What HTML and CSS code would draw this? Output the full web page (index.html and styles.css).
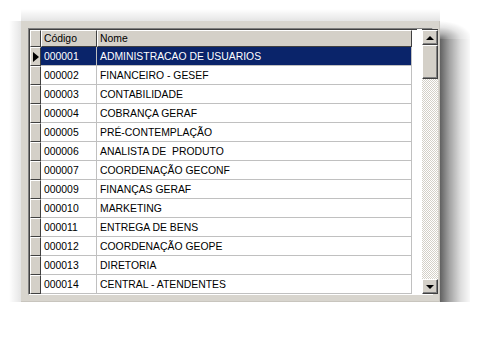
FILE: index.html
```html
<!DOCTYPE html>
<html>
<head>
<meta charset="utf-8">
<link rel="stylesheet" href="styles.css">
</head>
<body>
<div class="panel">
  <div class="grid">
    <div class="table">
      <div class="row head">
        <div class="ind"></div>
        <div class="cell code">Código</div>
        <div class="cell name">Nome</div>
      </div>
      <div class="row sel">
        <div class="ind"><span class="arrow"></span></div>
        <div class="cell code">000001</div>
        <div class="cell name">ADMINISTRACAO DE USUARIOS</div>
      </div>
      <div class="row"><div class="ind"></div><div class="cell code">000002</div><div class="cell name">FINANCEIRO - GESEF</div></div>
      <div class="row"><div class="ind"></div><div class="cell code">000003</div><div class="cell name">CONTABILIDADE</div></div>
      <div class="row"><div class="ind"></div><div class="cell code">000004</div><div class="cell name">COBRANÇA GERAF</div></div>
      <div class="row"><div class="ind"></div><div class="cell code">000005</div><div class="cell name">PRÉ-CONTEMPLAÇÃO</div></div>
      <div class="row"><div class="ind"></div><div class="cell code">000006</div><div class="cell name">ANALISTA DE&nbsp; PRODUTO</div></div>
      <div class="row"><div class="ind"></div><div class="cell code">000007</div><div class="cell name">COORDENAÇÃO GECONF</div></div>
      <div class="row"><div class="ind"></div><div class="cell code">000009</div><div class="cell name">FINANÇAS GERAF</div></div>
      <div class="row"><div class="ind"></div><div class="cell code">000010</div><div class="cell name">MARKETING</div></div>
      <div class="row"><div class="ind"></div><div class="cell code">000011</div><div class="cell name">ENTREGA DE BENS</div></div>
      <div class="row"><div class="ind"></div><div class="cell code">000012</div><div class="cell name">COORDENAÇÃO GEOPE</div></div>
      <div class="row"><div class="ind"></div><div class="cell code">000013</div><div class="cell name">DIRETORIA</div></div>
      <div class="row"><div class="ind"></div><div class="cell code">000014</div><div class="cell name">CENTRAL - ATENDENTES</div></div>
    </div>
    <div class="scrollbar">
      <div class="btn"><span class="tri up"></span></div>
      <div class="thumb"></div>
      <div class="track"></div>
      <div class="btn"><span class="tri down"></span></div>
    </div>
  </div>
</div>
</body>
</html>
```

FILE: styles.css
```css
html, body {
  margin: 0;
  padding: 0;
  background: #ffffff;
}
body {
  padding: 21px 0 0 21px;
  font-family: "Liberation Sans", Arial, sans-serif;
  font-size: 10.4px;
}
.panel {
  position: relative;
  z-index: 0;
  width: 419px;
  height: 281px;
  box-sizing: border-box;
  padding: 7px 6px 6px 7px;
  border-right: 1px solid #c8c5be;
  border-bottom: 1px solid #c8c5be;
}
/* soft drop shadow, drawn with gradients */
.panel::before {
  content: "";
  position: absolute;
  left: -12px;
  top: -12px;
  width: 461px;
  height: 325px;
  z-index: -2;
  background-repeat: no-repeat;
  background-image:
    linear-gradient(to right, rgba(0,0,0,0.62), rgba(0,0,0,0.36) 30%, rgba(0,0,0,0.13) 65%, rgba(0,0,0,0)),
    linear-gradient(to bottom, rgba(0,0,0,0.62), rgba(0,0,0,0.36) 30%, rgba(0,0,0,0.13) 65%, rgba(0,0,0,0)),
    radial-gradient(circle 32px at 0 0, rgba(0,0,0,0.62), rgba(0,0,0,0.36) 30%, rgba(0,0,0,0.13) 65%, rgba(0,0,0,0)),
    radial-gradient(32px 18px at 0 100%, rgba(0,0,0,0.55), rgba(0,0,0,0.3) 30%, rgba(0,0,0,0.1) 65%, rgba(0,0,0,0)),
    radial-gradient(18px 32px at 100% 0, rgba(0,0,0,0.55), rgba(0,0,0,0.3) 30%, rgba(0,0,0,0.1) 65%, rgba(0,0,0,0)),
    linear-gradient(to top, rgba(0,0,0,0.1), rgba(0,0,0,0)),
    linear-gradient(to left, rgba(0,0,0,0.1), rgba(0,0,0,0));
  background-position:
    431px 30px,
    30px 293px,
    431px 293px,
    431px 12px,
    12px 293px,
    12px 0,
    0 12px;
  background-size:
    32px 263px,
    401px 32px,
    32px 32px,
    32px 18px,
    18px 32px,
    419px 12px,
    12px 281px;
}
.panel::after {
  content: "";
  position: absolute;
  inset: 0;
  background: #d8d5ce;
  z-index: -1;
}
.grid {
  height: 267px;
  box-sizing: border-box;
  border-top: 1px solid #808080;
  border-left: 1px solid #808080;
  border-right: 1px solid #ffffff;
  border-bottom: 1px solid #ffffff;
  background: #ffffff;
  display: flex;
}
.grid > .table {
  border-top: 1px solid #404040;
  border-left: 1px solid #404040;
}
.table {
  width: 387px;
  flex: none;
  display: flex;
  flex-direction: column;
}
.row {
  display: flex;
  height: 19px;
  flex: none;
}
.row.head {
  height: 17px;
}
.ind {
  width: 11px;
  box-sizing: border-box;
  background: #d4d0c8;
  border-left: 1px solid #ffffff;
  border-top: 1px solid #ffffff;
  border-right: 1px solid #404040;
  border-bottom: 1px solid #404040;
  display: flex;
  align-items: center;
  justify-content: center;
  flex: none;
}
.cell {
  box-sizing: border-box;
  padding-left: 3px;
  display: flex;
  align-items: center;
  white-space: pre;
  color: #000;
  border-right: 1px solid #c0c0c0;
  border-bottom: 1px solid #c0c0c0;
  padding-top: 1px;
}
.code { width: 56px; }
.name { width: 315px; }
.head .cell {
  background: #d4d0c8;
  border-left: 1px solid #ffffff;
  border-top: 1px solid #ffffff;
  border-right: 1px solid #404040;
  border-bottom: 1px solid #404040;
  padding-left: 2px;
  padding-top: 0;
}
.sel .cell {
  background: #0a246a;
  color: #ffffff;
}
.arrow {
  width: 0;
  height: 0;
  border-top: 5px solid transparent;
  border-bottom: 5px solid transparent;
  border-left: 6px solid #000;
  margin-left: 1px;
}
.scrollbar {
  margin-left: 5px;
  width: 16px;
  flex: none;
  display: flex;
  flex-direction: column;
  border-top: 1px solid #404040;
}
.btn, .thumb {
  box-sizing: border-box;
  background: #d4d0c8;
  border-left: 1px solid #ffffff;
  border-top: 1px solid #ffffff;
  border-right: 1px solid #404040;
  border-bottom: 1px solid #404040;
  box-shadow: inset -1px -1px 0 #808080;
  flex: none;
}
.btn {
  height: 15px;
  display: flex;
  align-items: center;
  justify-content: center;
}
.thumb {
  height: 34px;
}
.track {
  flex: 1;
  background-color: #ffffff;
  background-image: repeating-conic-gradient(#d4d0c8 0 25%, #ffffff 0 50%);
  background-size: 2px 2px;
}
.tri {
  width: 0;
  height: 0;
  border-left: 4px solid transparent;
  border-right: 4px solid transparent;
}
.tri.up {
  border-bottom: 4px solid #000;
}
.tri.down {
  border-top: 4px solid #000;
}
```
